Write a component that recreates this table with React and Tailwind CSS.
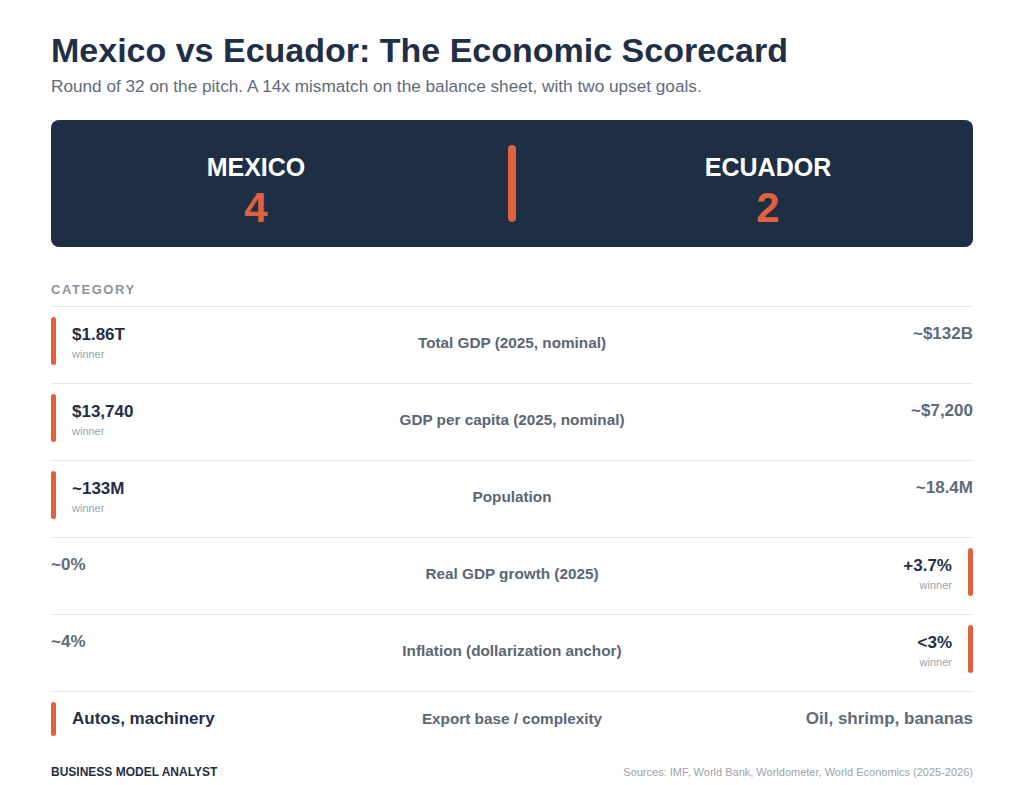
const rows = [
  { mx: "$1.86T", label: "Total GDP (2025, nominal)", ec: "~$132B", win: "mx" },
  { mx: "$13,740", label: "GDP per capita (2025, nominal)", ec: "~$7,200", win: "mx" },
  { mx: "~133M", label: "Population", ec: "~18.4M", win: "mx" },
  { mx: "~0%", label: "Real GDP growth (2025)", ec: "+3.7%", win: "ec" },
  { mx: "~4%", label: "Inflation (dollarization anchor)", ec: "<3%", win: "ec" },
  { mx: "Autos, machinery", label: "Export base / complexity", ec: "Oil, shrimp, bananas", win: "mx", plain: true },
];

function Winner({ value, side, plain }) {
  return (
    <div className={`flex gap-4 ${side === "ec" ? "justify-end" : ""}`}>
      {side === "mx" && <div className="w-[5px] shrink-0 rounded-full bg-[#e0613f]" />}
      <div className={`${plain ? "py-[6px]" : "pt-[7px] pb-[3px]"} ${side === "ec" ? "text-right" : ""}`}>
        <div className="text-[17px] font-bold leading-[22px] text-[#1f2f46]">{value}</div>
        {!plain && <div className="text-[11px] leading-[16px] text-[#9aa3ad]">winner</div>}
      </div>
      {side === "ec" && <div className="w-[5px] shrink-0 rounded-full bg-[#e0613f]" />}
    </div>
  );
}

function Loser({ value, side, plain }) {
  return (
    <div
      className={`self-start ${plain ? "py-[6px]" : "pt-[6px]"} text-[17px] font-bold leading-[22px] text-[#5f6b7a] ${side === "ec" ? "text-right" : ""}`}
    >
      {value}
    </div>
  );
}

export default function App() {
  return (
    <div className="min-h-[785px] w-[1024px] bg-white px-[51px] pt-[29px] font-['Liberation_Sans',Arial,sans-serif]">
      <h1 className="text-[34px] font-bold leading-[42px] text-[#1f2f46]">Mexico vs Ecuador: The Economic Scorecard</h1>
      <p className="mt-[3px] text-[17.2px] leading-[24px] text-[#5f6b7a]">
        Round of 32 on the pitch. A 14x mismatch on the balance sheet, with two upset goals.
      </p>

      <div className="mt-[22px] flex h-[127px] items-center rounded-lg bg-[#1e2f45]">
        <div className="mt-[16px] w-[410px] text-center">
          <div className="text-[25px] font-bold leading-none text-white">MEXICO</div>
          <div className="mt-[7px] text-[42px] font-bold leading-none text-[#e0613f]">4</div>
        </div>
        <div className="mx-[47px] h-[77px] w-2 rounded-full bg-[#e0613f]" />
        <div className="mt-[16px] w-[410px] text-center">
          <div className="text-[25px] font-bold leading-none text-white">ECUADOR</div>
          <div className="mt-[7px] text-[42px] font-bold leading-none text-[#e0613f]">2</div>
        </div>
      </div>

      <div className="mt-[35px] mb-[8px] text-[13px] font-bold leading-[16px] tracking-[0.12em] text-[#8a939e]">CATEGORY</div>

      <div>
        {rows.map((r) => (
          <div
            key={r.label}
            className="grid grid-cols-[1fr_auto_1fr] items-center border-t border-[#e5e7eb] pt-[10px] pb-[18px]"
          >
            <div className="flex self-stretch">
              {r.win === "mx" ? <Winner value={r.mx} side="mx" plain={r.plain} /> : <Loser value={r.mx} side="mx" plain={r.plain} />}
            </div>
            <div className={`text-center text-[15.3px] font-bold text-[#5b6676] ${r.plain ? "" : "mt-[4px]"}`}>{r.label}</div>
            <div className="flex justify-end self-stretch">
              {r.win === "ec" ? <Winner value={r.ec} side="ec" plain={r.plain} /> : <Loser value={r.ec} side="ec" plain={r.plain} />}
            </div>
          </div>
        ))}
      </div>

      <div className="mt-[10px] flex items-baseline justify-between">
        <div className="text-[12px] font-bold leading-[16px] text-[#1f2f46]">BUSINESS MODEL ANALYST</div>
        <div className="text-[11px] leading-[16px] text-[#9aa3ad]">Sources: IMF, World Bank, Worldometer, World Economics (2025-2026)</div>
      </div>
    </div>
  );
}
